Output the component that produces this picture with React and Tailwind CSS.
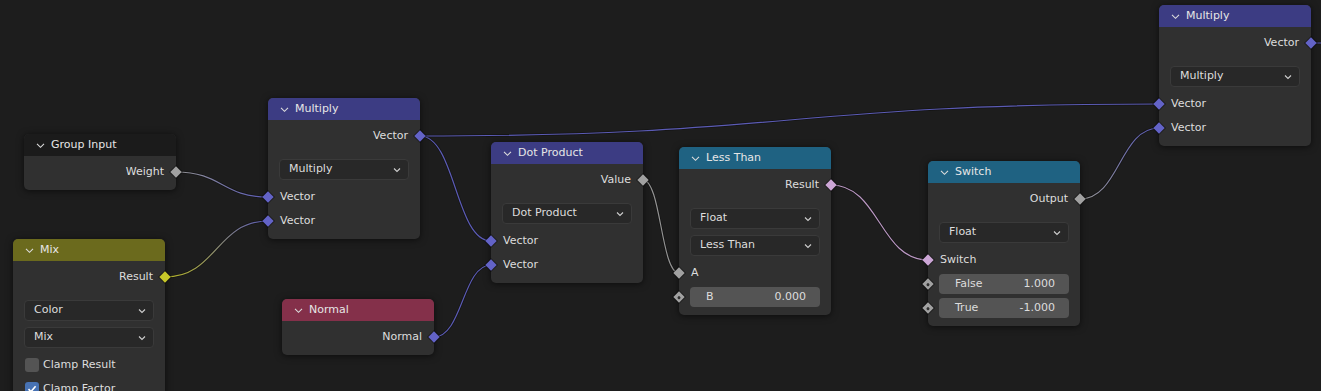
import React from "react";

const SOCK = {
  vec: "bg-[#6363c7]",
  flt: "bg-[#a1a1a1]",
  col: "bg-[#c7c729]",
  bool: "bg-[#cca6d6]",
};

const HEX = { vec: "#6363c7", flt: "#a1a1a1", col: "#c7c729", bool: "#cca6d6" };

// socket centres are worked out from node top + row heights (see Node layout)
const links = [
  { a: [176, 172], b: [268, 197], from: "flt", to: "vec" },
  { a: [165, 277], b: [268, 221], from: "col", to: "vec" },
  { a: [420, 136], b: [491, 241], from: "vec", to: "vec" },
  { a: [434, 337], b: [491, 265], from: "vec", to: "vec" },
  { a: [420, 136], b: [1159, 104], from: "vec", to: "vec" },
  { a: [643, 180], b: [679, 273], from: "flt", to: "flt" },
  { a: [831, 185], b: [928, 260], from: "bool", to: "bool" },
  { a: [1080, 199], b: [1159, 128], from: "flt", to: "vec" },
  { a: [1311, 43], b: [1380, 43], from: "vec", to: "vec" },
];

function curve([x1, y1], [x2, y2]) {
  const h = Math.abs(x2 - x1) * 0.5;
  return `M${x1} ${y1} C${x1 + h} ${y1} ${x2 - h} ${y2} ${x2} ${y2}`;
}

function Links() {
  return (
    <svg className="absolute inset-0" width="1321" height="391">
      <defs>
        {links.map((l, i) => (
          <linearGradient
            key={i}
            id={`lg${i}`}
            gradientUnits="userSpaceOnUse"
            x1={l.a[0]}
            y1={l.a[1]}
            x2={l.b[0]}
            y2={l.b[1]}
          >
            <stop offset="0" stopColor={HEX[l.from]} />
            <stop offset="1" stopColor={HEX[l.to]} />
          </linearGradient>
        ))}
      </defs>
      {links.map((l, i) => (
        <g key={i} fill="none">
          <path d={curve(l.a, l.b)} stroke="rgba(0,0,0,0.35)" strokeWidth="2.6" />
          <path d={curve(l.a, l.b)} stroke={`url(#lg${i})`} strokeWidth="1.2" opacity="0.9" />
        </g>
      ))}
    </svg>
  );
}

function Socket({ kind, side, hollow }) {
  return (
    <span
      className={`absolute top-1/2 size-[8px] -translate-y-1/2 rotate-45 ring-1 ring-black/40 ${
        side === "l" ? "-left-[4px]" : "-right-[4px]"
      } ${SOCK[kind]}`}
    >
      {hollow && <span className="absolute inset-[2.5px] rounded-full bg-[#303030]" />}
    </span>
  );
}

function Chevron() {
  return (
    <svg width="9" height="9" viewBox="0 0 9 9">
      <path d="M1 2.8 4.5 6.3 8 2.8" fill="none" stroke="#dcdcdc" strokeWidth="1.1" />
    </svg>
  );
}

function Node({ pos, head, title, children }) {
  return (
    <div
      className={`absolute w-[152px] rounded-[5px] bg-[#303030] shadow-[0_1px_7px_rgba(0,0,0,0.6)] ${pos}`}
    >
      <div
        className={`flex h-[22px] items-center gap-[6px] rounded-t-[5px] pl-3 text-[#e6e6e6] ${head}`}
      >
        <Chevron />
        <span>{title}</span>
      </div>
      <div className="pt-1 pb-[6px]">{children}</div>
    </div>
  );
}

function Out({ label, kind }) {
  return (
    <div className="relative flex h-6 items-center justify-end pr-3">
      <span>{label}</span>
      <Socket kind={kind} side="r" />
    </div>
  );
}

function In({ label, kind }) {
  return (
    <div className="relative flex h-6 items-center pl-3">
      <Socket kind={kind} side="l" />
      <span>{label}</span>
    </div>
  );
}

function Select({ label }) {
  return (
    <div className="mx-[11px] flex h-[21px] items-center justify-between rounded-[4px] border border-[#3a3a3a] bg-[#282828] pl-[9px] pr-[7px]">
      <span>{label}</span>
      <svg width="8" height="8" viewBox="0 0 8 8">
        <path d="M1 2.5 4 5.5 7 2.5" fill="none" stroke="#cfcfcf" strokeWidth="1.1" />
      </svg>
    </div>
  );
}

function Selects({ children }) {
  return <div className="mt-[11px] mb-[5px] flex flex-col gap-[6px]">{children}</div>;
}

function Field({ label, value }) {
  return (
    <div className="relative flex h-6 items-center">
      <Socket kind="flt" side="l" hollow />
      <div className="mx-[11px] flex h-5 flex-1 items-center justify-between rounded-[4px] bg-[#545454] pl-4 pr-[14px]">
        <span>{label}</span>
        <span>{value}</span>
      </div>
    </div>
  );
}

function Check({ label, on }) {
  return (
    <div className="flex h-6 items-center gap-1 pl-3">
      {on ? (
        <span className="flex size-[14px] items-center justify-center rounded-[3px] bg-[#4772b3]">
          <svg width="10" height="10" viewBox="0 0 10 10">
            <path d="M1.5 5.2 4 7.6 8.6 2.2" fill="none" stroke="#fff" strokeWidth="1.6" />
          </svg>
        </span>
      ) : (
        <span className="size-[14px] rounded-[3px] bg-[#545454]" />
      )}
      <span>{label}</span>
    </div>
  );
}

export default function App() {
  return (
    <div className="relative h-[391px] w-[1321px] overflow-hidden bg-[#1d1d1d] font-['DejaVu_Sans',sans-serif] text-[11px] text-[#dddddd]">
      <Links />

      <Node pos="left-[24px] top-[134px]" head="bg-[#1b1b1b]" title="Group Input">
        <Out label="Weight" kind="flt" />
      </Node>

      <Node pos="left-[268px] top-[98px]" head="bg-[#3c3c83]" title="Multiply">
        <Out label="Vector" kind="vec" />
        <Selects>
          <Select label="Multiply" />
        </Selects>
        <In label="Vector" kind="vec" />
        <In label="Vector" kind="vec" />
      </Node>

      <Node pos="left-[13px] top-[239px]" head="bg-[#6b6a1d]" title="Mix">
        <Out label="Result" kind="col" />
        <Selects>
          <Select label="Color" />
          <Select label="Mix" />
        </Selects>
        <Check label="Clamp Result" />
        <Check label="Clamp Factor" on />
      </Node>

      <Node pos="left-[282px] top-[299px]" head="bg-[#84304a]" title="Normal">
        <Out label="Normal" kind="vec" />
      </Node>

      <Node pos="left-[491px] top-[142px]" head="bg-[#3c3c83]" title="Dot Product">
        <Out label="Value" kind="flt" />
        <Selects>
          <Select label="Dot Product" />
        </Selects>
        <In label="Vector" kind="vec" />
        <In label="Vector" kind="vec" />
      </Node>

      <Node pos="left-[679px] top-[147px]" head="bg-[#1f6282]" title="Less Than">
        <Out label="Result" kind="bool" />
        <Selects>
          <Select label="Float" />
          <Select label="Less Than" />
        </Selects>
        <In label="A" kind="flt" />
        <Field label="B" value="0.000" />
      </Node>

      <Node pos="left-[928px] top-[161px]" head="bg-[#1f6282]" title="Switch">
        <Out label="Output" kind="flt" />
        <Selects>
          <Select label="Float" />
        </Selects>
        <In label="Switch" kind="bool" />
        <Field label="False" value="1.000" />
        <Field label="True" value="-1.000" />
      </Node>

      <Node pos="left-[1159px] top-[5px]" head="bg-[#3c3c83]" title="Multiply">
        <Out label="Vector" kind="vec" />
        <Selects>
          <Select label="Multiply" />
        </Selects>
        <In label="Vector" kind="vec" />
        <In label="Vector" kind="vec" />
      </Node>
    </div>
  );
}
